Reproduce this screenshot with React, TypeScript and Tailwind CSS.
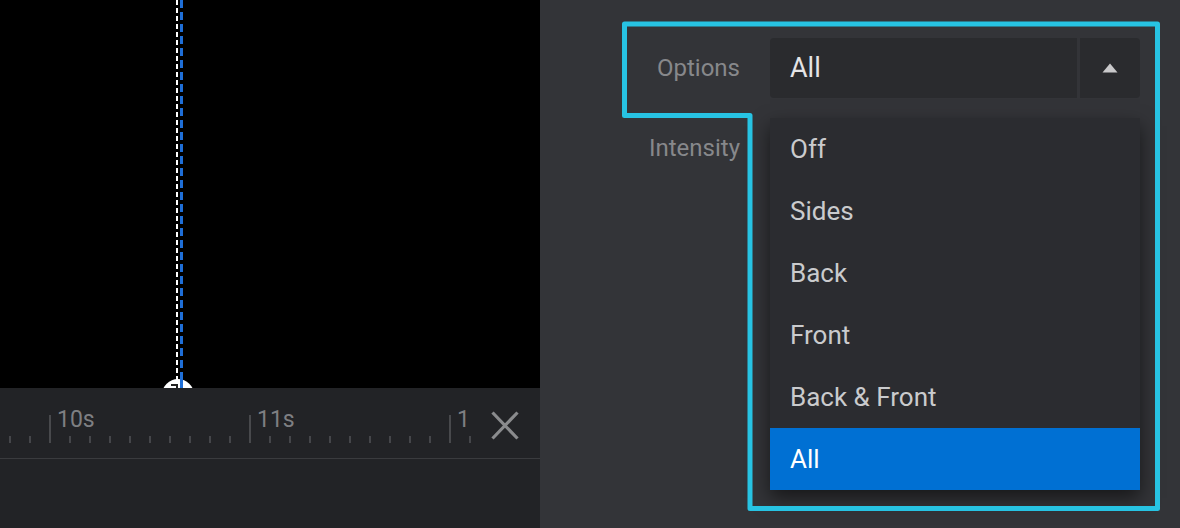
import React from "react";

const ticks = Array.from({ length: 24 }, (_, i) => 10 + i * 20);
const labels = [
  { x: 57, text: "10s" },
  { x: 257, text: "11s" },
  { x: 457, text: "1" },
];
const options = ["Off", "Sides", "Back", "Front", "Back & Front", "All"];

function Timeline() {
  return (
    <div className="flex-1 bg-[#222326] flex flex-col">
      <div className="relative h-[71px] border-b border-[#3a3b3e]">
        <div className="absolute left-0 top-0 h-full w-[474px] overflow-hidden">
          {ticks.map((x) => {
            const major = (x - 50) % 200 === 0;
            return (
              <div
                key={x}
                className={major ? "absolute top-[27px] h-[28px] w-[2px] bg-[#48494c]" : "absolute top-[48px] h-[7px] w-[2px] bg-[#45464a]"}
                style={{ left: x - 1 }}
              />
            );
          })}
          {labels.map((l) => (
            <span
              key={l.text}
              className="absolute top-[20px] text-[23px] leading-[23px] text-[#7e7f82]"
              style={{ left: l.x }}
            >
              {l.text}
            </span>
          ))}
        </div>
        <button className="absolute left-[491px] top-[23px] w-[28px] h-[29px] flex items-center justify-center">
          <svg width="28" height="29" viewBox="0 0 28 29">
            <path d="M1.5 1.5 L26.5 27.5 M26.5 1.5 L1.5 27.5" stroke="#8a8b8d" strokeWidth="3.2" fill="none" />
          </svg>
        </button>
      </div>
      <div className="flex-1" />
    </div>
  );
}

function Viewport() {
  return (
    <div className="relative h-[388px] bg-black overflow-hidden">
      <div className="absolute left-[176px] top-0 h-full w-[2px] bg-[repeating-linear-gradient(to_bottom,#ffffff_0px,#ffffff_5px,transparent_5px,transparent_8px)]" />
      <div className="absolute left-[180px] top-0 h-full w-[3px] bg-[repeating-linear-gradient(to_bottom,#1f6fd8_0px,#1f6fd8_8px,transparent_8px,transparent_12px)]" />
      <div className="absolute left-[162px] top-[379px] w-[32px] h-[32px] rounded-full bg-white">
        <div className="absolute left-[9px] top-[5px] w-[7px] h-[2px] bg-[#222]" />
        <div className="absolute left-[14px] top-[5px] w-[2px] h-[8px] bg-[#222]" />
        <div className="absolute left-[18px] top-0 w-[3px] h-[12px] bg-[#1f6fd8]" />
      </div>
    </div>
  );
}

function Settings() {
  return (
    <div className="flex-1 bg-[#333438] pt-[38px] pl-[60px]">
      <div className="flex items-center h-[60px]">
        <div className="w-[140px] text-right text-[24px] text-[#87888b]">Options</div>
        <div className="relative ml-[30px] flex w-[370px] h-[60px] gap-[3px]">
          <div className="flex-1 rounded-l-[4px] bg-[#2a2b2e] flex items-center pl-[20px] text-[27px] text-[#e4e4e6]">
            All
          </div>
          <div className="w-[60px] rounded-r-[4px] bg-[#2a2b2e] flex items-center justify-center">
            <svg width="16" height="10" viewBox="0 0 16 10">
              <path d="M8 0.5 L15.5 9.5 L0.5 9.5 Z" fill="#c9c9cb" />
            </svg>
          </div>
          <ul className="absolute left-0 top-[80px] w-[370px] bg-[#2b2c30] shadow-[0_8px_18px_rgba(0,0,0,0.55)] z-10">
            {options.map((o) => (
              <li
                key={o}
                className={
                  o === "All"
                    ? "h-[62px] flex items-center pl-[20px] text-[26px] bg-[#0070d3] text-white"
                    : "h-[62px] flex items-center pl-[20px] text-[26px] text-[#cacbcd]"
                }
              >
                {o}
              </li>
            ))}
          </ul>
        </div>
      </div>
      <div className="flex items-center h-[60px] mt-[20px]">
        <div className="w-[140px] text-right text-[24px] text-[#87888b]">Intensity</div>
      </div>
    </div>
  );
}

export default function App() {
  return (
    <div className="relative w-[1180px] h-[528px] flex overflow-hidden font-['Roboto',sans-serif]">
      <div className="w-[540px] flex flex-col">
        <Viewport />
        <Timeline />
      </div>
      <Settings />
      <svg className="absolute left-0 top-0 pointer-events-none z-20" width="1180" height="528">
        <path
          d="M624.5 24 L1157.5 24 L1157.5 508.5 L750 508.5 L750 115.5 L624.5 115.5 Z"
          fill="none"
          stroke="#27c3e3"
          strokeWidth="5"
          strokeLinejoin="round"
        />
      </svg>
    </div>
  );
}
